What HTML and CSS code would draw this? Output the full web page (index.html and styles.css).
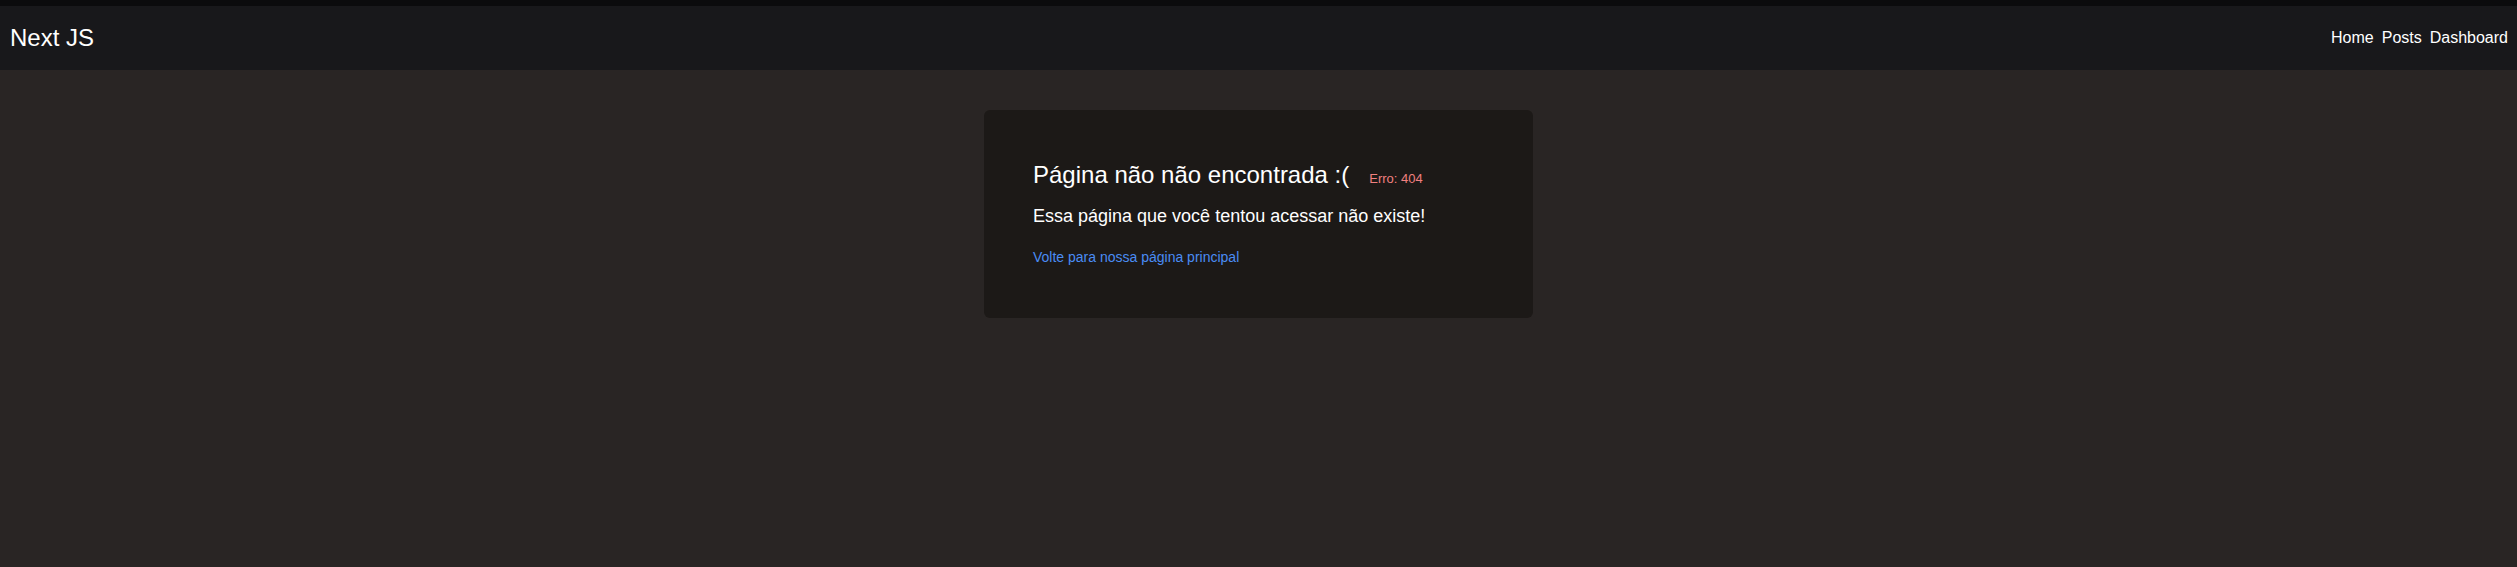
FILE: index.html
```html
<!DOCTYPE html>
<html lang="pt-BR">
<head>
<meta charset="utf-8">
<title>Next JS</title>
<link rel="stylesheet" href="styles.css">
</head>
<body>
<header class="topbar">
  <a class="brand" href="#">Next JS</a>
  <nav class="nav">
    <a href="#">Home</a>
    <a href="#">Posts</a>
    <a href="#">Dashboard</a>
  </nav>
</header>
<main class="main">
  <section class="card">
    <h1 class="title">Página não não encontrada :(<span class="code">Erro: 404</span></h1>
    <p class="desc">Essa página que você tentou acessar não existe!</p>
    <p class="back"><a href="#">Volte para nossa página principal</a></p>
  </section>
</main>
</body>
</html>
```
FILE: styles.css
```css
* { box-sizing: border-box; }
html, body { margin: 0; padding: 0; }
body {
  background: #292524;
  color: #ffffff;
  font-family: "Liberation Sans", Arial, sans-serif;
  min-height: 567px;
}
a { text-decoration: none; }
.topbar {
  height: 70px;
  border-top: 6px solid #0b0b0d;
  background: #18181b;
  display: flex;
  align-items: center;
  justify-content: space-between;
  padding: 0 9px 0 10px;
}
.brand {
  color: #ffffff;
  font-size: 24px;
}
.nav {
  display: flex;
  gap: 8px;
}
.nav a {
  color: #ffffff;
  font-size: 16px;
}
.main {
  padding-top: 40px;
}
.card {
  width: 549px;
  margin: 0 auto;
  background: #1c1917;
  border-radius: 6px;
  padding: 51px 49px 53px;
}
.title {
  margin: 0;
  font-size: 24px;
  font-weight: 400;
}
.code {
  margin-left: 20px;
  font-size: 13px;
  color: #f08080;
}
.desc {
  margin: 17px 0 0;
  font-size: 18px;
}
.back {
  margin: 22px 0 0;
  font-size: 14px;
}
.back a { color: #4a8cf4; }
```
